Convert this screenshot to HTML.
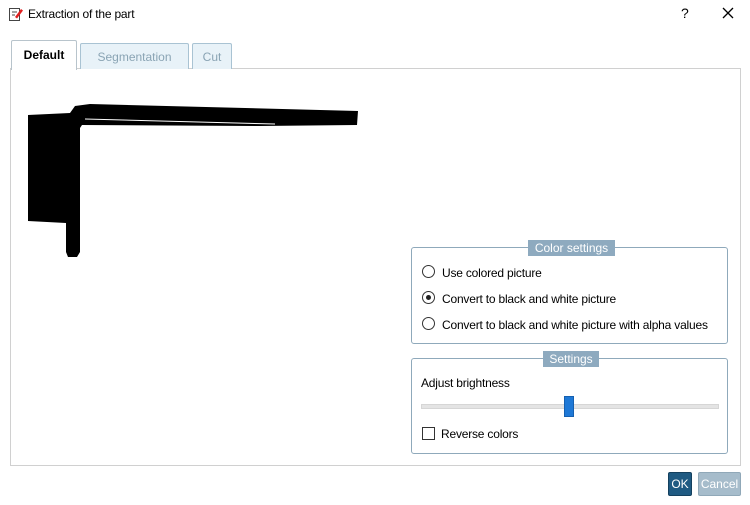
<!DOCTYPE html><html><head><style>
*{box-sizing:border-box}
body{margin:0;width:750px;height:505px;background:#fff;font-family:"Liberation Sans",sans-serif;font-size:12px;color:#000;position:relative;overflow:hidden}
.a{position:absolute}
.tab{position:absolute;border:1px solid #a9c3d3;border-bottom:none;background:#e8f2f8;color:#8aa4b4;text-align:center;border-radius:2px 2px 0 0}
.grp{position:absolute;border:1px solid #8fa9bb;border-radius:3px}
.lg{position:absolute;background:#8eaabf;color:#fff;text-align:center;height:16px;line-height:16px}
.rad{position:absolute;width:13px;height:13px;border:1px solid #333;border-radius:50%;background:#fff}
.t{letter-spacing:-0.2px}
</style></head><body>
<svg class="a" style="left:8px;top:6px" width="16" height="16" viewBox="0 0 16 16"><rect x="1.5" y="2.5" width="10" height="12" fill="#fff" stroke="#444"/><path d="M4 6h5M4 9h3" stroke="#444"/><path d="M7 11l6-8 2 1.5-6 8z" fill="#e02020"/></svg>
<div class="a t" style="left:28px;top:7px">Extraction of the part</div>
<div class="a" style="left:681px;top:5px;font-size:14px">?</div>
<svg class="a" style="left:722px;top:7px" width="12" height="12"><path d="M1 1l10 10M11 1L1 11" stroke="#000" stroke-width="1.3"/></svg>
<div class="a" style="left:10px;top:68px;width:731px;height:398px;border:1px solid #d0d0d0"></div>
<div class="tab" style="left:11px;top:40px;width:66px;height:30px;background:#fff;border-color:#b8c4cc;color:#000;font-weight:bold;line-height:28px">Default</div>
<div class="tab" style="left:80px;top:43px;width:109px;height:26px;line-height:26px">Segmentation</div>
<div class="tab" style="left:192px;top:43px;width:40px;height:26px;line-height:26px">Cut</div>
<svg class="a" style="left:0;top:0" width="400" height="270"><polygon points="28,115 70,113 75,106 90,104 358,111 357,125 260,126 82,125 80,128 80,252 77,257 68,257 66,252 66,223 28,221" fill="#000"/><path d="M85 119L275 124" stroke="#fff" stroke-width="1"/></svg>
<div class="grp" style="left:411px;top:247px;width:317px;height:97px"></div>
<div class="lg" style="left:528px;top:240px;width:87px">Color settings</div>
<div class="rad" style="left:422px;top:265px"></div>
<div class="a t" style="left:442px;top:266px">Use colored picture</div>
<div class="rad" style="left:422px;top:291px"></div><div class="a" style="left:426px;top:295px;width:5px;height:5px;border-radius:50%;background:#222"></div>
<div class="a t" style="left:442px;top:292px">Convert to black and white picture</div>
<div class="rad" style="left:422px;top:317px"></div>
<div class="a t" style="left:442px;top:318px">Convert to black and white picture with alpha values</div>
<div class="grp" style="left:411px;top:358px;width:317px;height:96px"></div>
<div class="lg" style="left:543px;top:351px;width:56px">Settings</div>
<div class="a t" style="left:421px;top:376px">Adjust brightness</div>
<div class="a" style="left:421px;top:404px;width:298px;height:5px;background:#e4e4e4;border:1px solid #d6d6d6"></div>
<div class="a" style="left:564px;top:396px;width:10px;height:21px;background:#1e78d6;border:1px solid #1560b0"></div>
<div class="a" style="left:422px;top:427px;width:13px;height:13px;border:1px solid #333"></div>
<div class="a t" style="left:441px;top:427px">Reverse colors</div>
<div class="a" style="left:668px;top:472px;width:24px;height:24px;background:#1f5a82;border:1px solid #14405e;border-radius:2px;color:#fff;text-align:center;line-height:22px">OK</div>
<div class="a" style="left:698px;top:472px;width:43px;height:24px;background:#a6bccb;border:1px solid #90a8b8;border-radius:2px;color:#fff;text-align:center;line-height:22px">Cancel</div>
</body></html>
